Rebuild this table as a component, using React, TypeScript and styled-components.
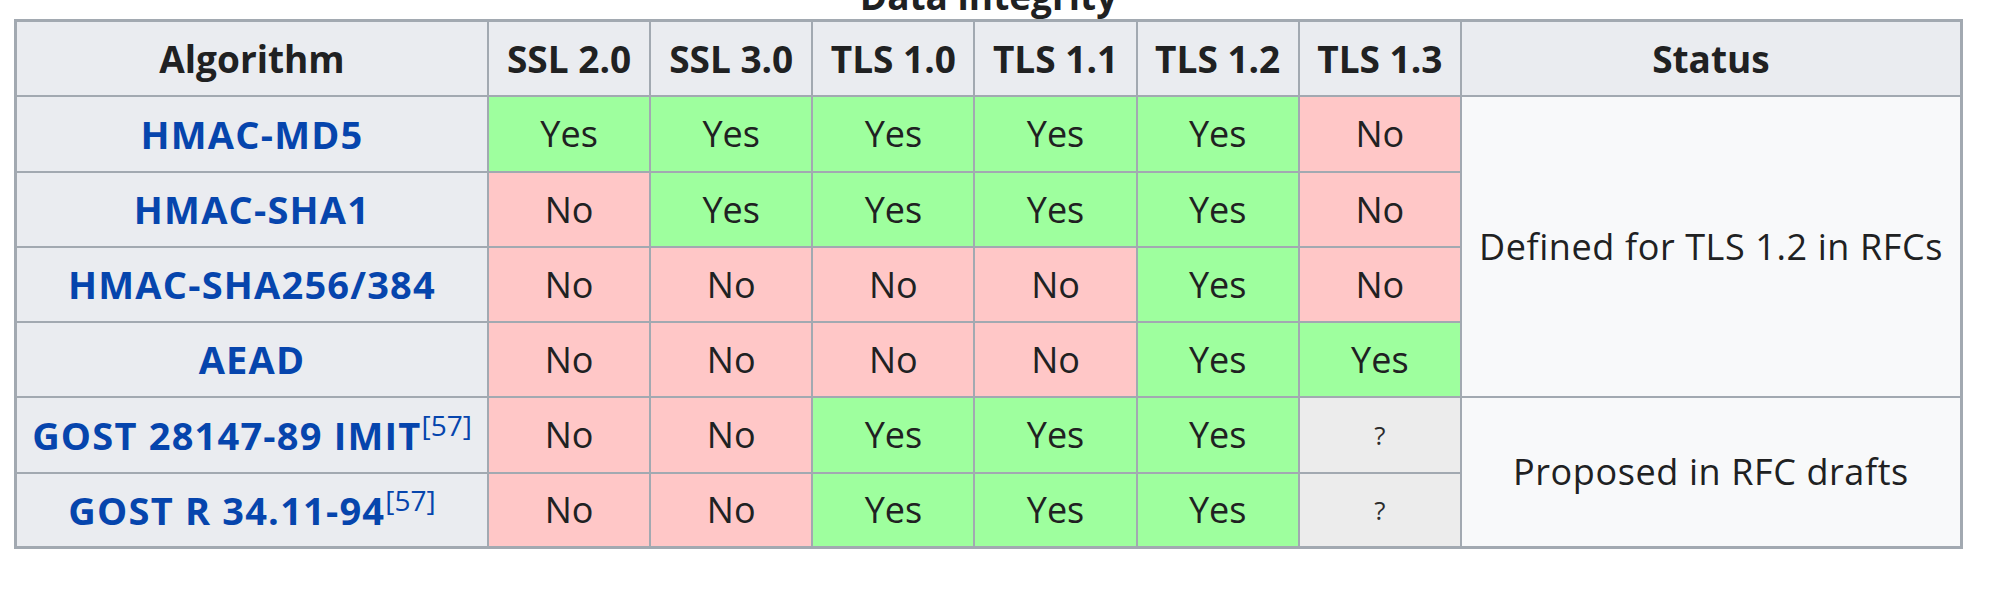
import { FC } from "react";
import styled, { createGlobalStyle } from "styled-components";

type Support = "yes" | "no" | "unknown";

type AlgoRow = {
  name: string;
  ref?: string;
  values: Support[];
};

const VERSIONS = ["SSL 2.0", "SSL 3.0", "TLS 1.0", "TLS 1.1", "TLS 1.2", "TLS 1.3"];

const ROWS: AlgoRow[] = [
  { name: "HMAC-MD5", values: ["yes", "yes", "yes", "yes", "yes", "no"] },
  { name: "HMAC-SHA1", values: ["no", "yes", "yes", "yes", "yes", "no"] },
  { name: "HMAC-SHA256/384", values: ["no", "no", "no", "no", "yes", "no"] },
  { name: "AEAD", values: ["no", "no", "no", "no", "yes", "yes"] },
  { name: "GOST 28147-89 IMIT", ref: "[57]", values: ["no", "no", "yes", "yes", "yes", "unknown"] },
  { name: "GOST R 34.11-94", ref: "[57]", values: ["no", "no", "yes", "yes", "yes", "unknown"] },
];

// status column spans several rows
const STATUS: Record<number, { text: string; span: number }> = {
  0: { text: "Defined for TLS 1.2 in RFCs", span: 4 },
  4: { text: "Proposed in RFC drafts", span: 2 },
};

const LABEL: Record<Support, string> = { yes: "Yes", no: "No", unknown: "?" };

const COLORS: Record<Support, string> = {
  yes: "#9eff9e",
  no: "#ffc7c7",
  unknown: "#ececec",
};

const App: FC = () => (
  <>
    <GlobalStyle />
    <Page>
      <Table>
        <Caption>Data integrity</Caption>
        <colgroup>
          <Col $width={472} />
          {VERSIONS.map((v) => (
            <Col key={v} $width={162} />
          ))}
          <Col $width={500} />
        </colgroup>
        <thead>
          <Row $height={75}>
            <HeadCell>Algorithm</HeadCell>
            {VERSIONS.map((v) => (
              <HeadCell key={v}>{v}</HeadCell>
            ))}
            <HeadCell>Status</HeadCell>
          </Row>
        </thead>
        <tbody>
          {ROWS.map((row, i) => (
            <Row key={row.name} $height={i === 0 || i === 4 ? 76 : 75} $thickTop={i === 2 || i === 4}>
              <RowHead>
                <AlgoLink href="#">{row.name}</AlgoLink>
                {row.ref && <Ref>{row.ref}</Ref>}
              </RowHead>
              {row.values.map((v, j) => (
                <Cell key={j} $state={v}>
                  {LABEL[v]}
                </Cell>
              ))}
              {STATUS[i] && <StatusCell rowSpan={STATUS[i].span}>{STATUS[i].text}</StatusCell>}
            </Row>
          ))}
        </tbody>
      </Table>
    </Page>
  </>
);

const GlobalStyle = createGlobalStyle`
  html, body {
    margin: 0;
    padding: 0;
    background: #ffffff;
    overflow: hidden;
  }
  body {
    font-family: "Open Sans", "Noto Sans", sans-serif;
    color: #202122;
  }
`;

const Page = styled.div`
  padding-left: 14px;
  margin-top: -24px;
`;

const Table = styled.table`
  table-layout: fixed;
  width: 1949px;
  border-collapse: collapse;
  border: 3px solid #a2a9b1;
  background: #f8f9fa;
  font-size: 36px;
  color: #202122;
`;

const Caption = styled.caption`
  font-size: 37px;
  font-weight: 700;
  line-height: 40px;
  padding-bottom: 3px;
  text-align: center;
`;

const Col = styled.col<{ $width: number }>`
  width: ${({ $width }) => $width}px;
`;

const Row = styled.tr<{ $height: number; $thickTop?: boolean }>`
  height: ${({ $height }) => $height}px;

  & > * {
    border-top-width: ${({ $thickTop }) => ($thickTop ? "3px" : "2px")};
  }
`;

const HeadCell = styled.th`
  background: #eaecf0;
  border: 2px solid #a2a9b1;
  font-size: 37px;
  font-weight: 700;
  text-align: center;
  padding: 0 8px;
  white-space: nowrap;
`;

const RowHead = styled.th`
  background: #eaecf0;
  border: 2px solid #a2a9b1;
  font-size: 38px;
  font-weight: 700;
  text-align: center;
  padding: 0 4px;
  white-space: nowrap;
`;

const AlgoLink = styled.a`
  color: #0645ad;
  text-decoration: none;
  letter-spacing: 1.2px;
`;

const Ref = styled.sup`
  font-size: 28px;
  font-weight: 400;
  color: #0645ad;
  line-height: 1;
  vertical-align: 14px;
`;

const Cell = styled.td<{ $state: Support }>`
  background: ${({ $state }) => COLORS[$state]};
  border: 2px solid #a2a9b1;
  text-align: center;
  padding: 0;
  font-size: ${({ $state }) => ($state === "unknown" ? "26px" : "36px")};
  color: ${({ $state }) => ($state === "unknown" ? "#2c2c2c" : "#202122")};
`;

const StatusCell = styled.td`
  background: #f8f9fa;
  border: 2px solid #a2a9b1;
  text-align: center;
  padding: 0 4px;
  white-space: nowrap;
  letter-spacing: 0.6px;
`;

export default App;
